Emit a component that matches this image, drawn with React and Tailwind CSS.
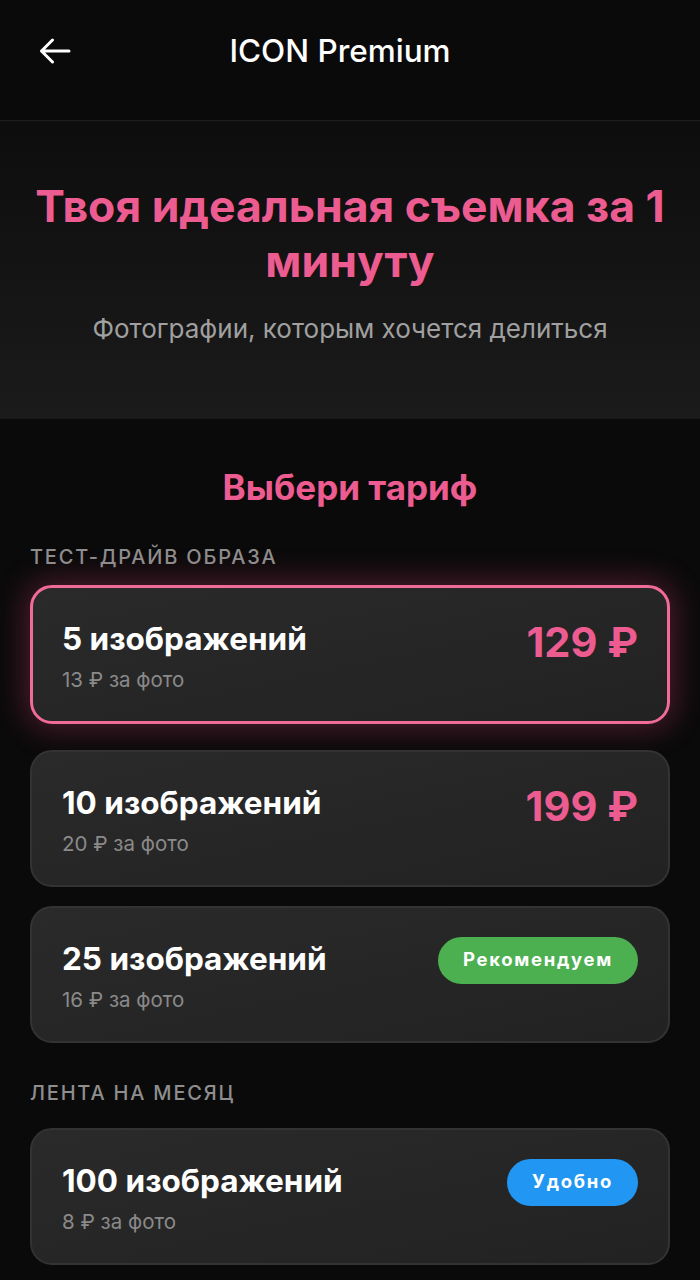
import React from "react";

function Card({ title, sub, right, selected, className = "" }) {
  return (
    <div
      className={
        "rounded-[22px] pt-[33px] pb-[28px] bg-gradient-to-br from-[#2a2a2a] to-[#222222] " +
        (selected
          ? "px-[29px] border-[3px] border-[#f06a9a] shadow-[0_0_30px_6px_rgba(236,72,130,0.28)] "
          : "px-[30px] border-2 border-[#333333] ") +
        className
      }
    >
      <div className="flex items-center justify-between h-[36px]">
        <div className="text-[31.5px] leading-[36px] font-bold text-white">{title}</div>
        {right}
      </div>
      <div className="mt-[10px] text-[20.5px] leading-[26px] text-[#8a8a8a]">{sub}</div>
    </div>
  );
}

function Price({ children }) {
  return (
    <div className="text-[41.5px] leading-[36px] font-bold text-[#ec5c90] mt-[6px]">{children}</div>
  );
}

function Badge({ children, color }) {
  return (
    <div
      className={
        "h-[47px] px-[25px] rounded-full flex items-center text-[18.5px] font-bold tracking-[1.7px] text-white mt-[2px] " +
        color
      }
    >
      {children}
    </div>
  );
}

export default function App() {
  return (
    <div
      className="w-[700px] h-[1280px] overflow-hidden bg-[#0a0a0a]"
      style={{ fontFamily: "Inter, Roboto, 'Noto Sans', sans-serif" }}
    >
      {/* Header */}
      <div className="h-[121px] flex items-center border-b border-[#1e1e1e] bg-[#0a0a0a] px-[39px]">
        <svg width="32" height="26" viewBox="0 0 32 26" className="mt-[-19px]">
          <path d="M30 13H2.5M13.5 2L2.5 13l11 11" fill="none" stroke="white" strokeWidth="3" strokeLinecap="round" strokeLinejoin="round" />
        </svg>
        <div className="flex-1 text-center text-[31.5px] font-medium text-white mr-[52px] mt-[-18px]">ICON Premium</div>
      </div>

      {/* Hero */}
      <div className="bg-gradient-to-b from-[#0d0d0d] to-[#1b1b1b] pt-[58px] pb-[74px] px-[24px] text-center">
        <div className="text-[44.5px] leading-[55px] font-bold text-[#ec5c90]">
          Твоя идеальная съемка за 1 минуту
        </div>
        <div className="mt-[24px] text-[26px] leading-[32px] text-[#a0a0a0]">
          Фотографии, которым хочется делиться
        </div>
      </div>

      {/* Plans */}
      <div className="bg-[#0a0a0a] px-[30px] pt-[46px]">
        <div className="text-center text-[35px] leading-[44px] font-bold text-[#ec5c90]">Выбери тариф</div>
        <div className="mt-[35px] text-[20px] leading-[26px] font-medium tracking-[1.8px] text-[#8e8e8e]">
          ТЕСТ-ДРАЙВ ОБРАЗА
        </div>
        <div className="mt-[15px] flex flex-col">
          <Card selected title="5 изображений" sub="13 ₽ за фото" right={<Price>129 ₽</Price>} className="mb-[26px]" />
          <Card title="10 изображений" sub="20 ₽ за фото" right={<Price>199 ₽</Price>} className="mb-[19px]" />
          <Card title="25 изображений" sub="16 ₽ за фото" right={<Badge color="bg-[#4caf50]">Рекомендуем</Badge>} />
        </div>
        <div className="mt-[37px] text-[20px] leading-[26px] font-medium tracking-[1.8px] text-[#8e8e8e]">
          ЛЕНТА НА МЕСЯЦ
        </div>
        <div className="mt-[22px]">
          <Card title="100 изображений" sub="8 ₽ за фото" right={<Badge color="bg-[#2196f3]">Удобно</Badge>} />
        </div>
      </div>
    </div>
  );
}
